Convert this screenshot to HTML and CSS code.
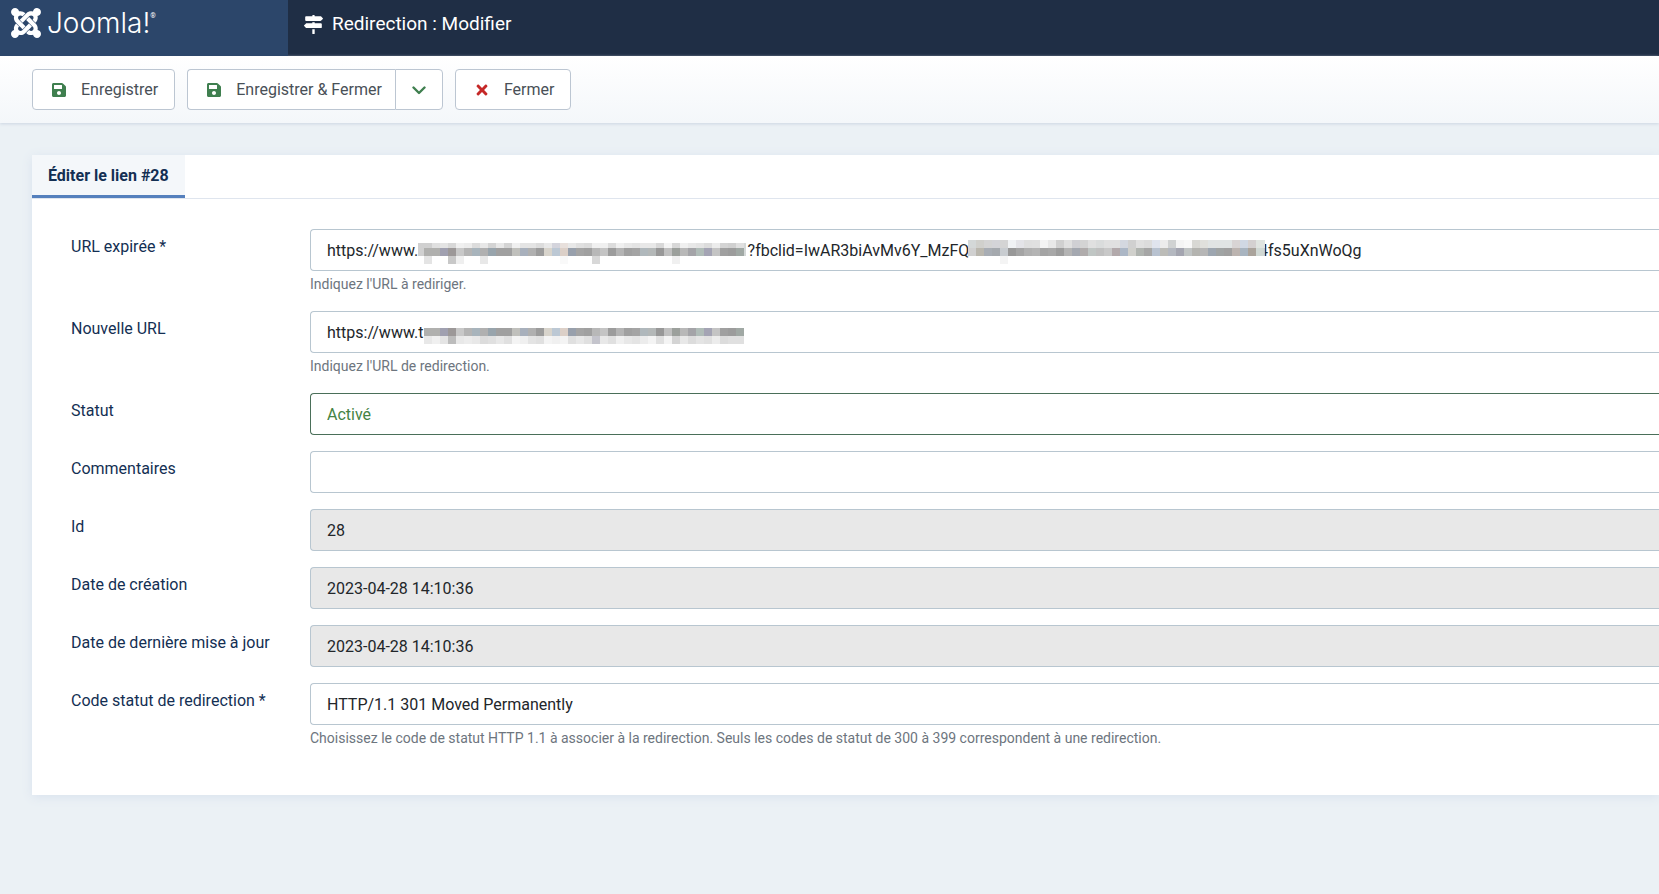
FILE: index.html
```html
<!DOCTYPE html>
<html lang="fr">
<head>
<meta charset="utf-8">
<title>Redirection : Modifier</title>
<link rel="stylesheet" href="styles.css">
</head>
<body>
<header class="header">
  <a class="brand" href="#" aria-label="Joomla!">
    <svg class="brand-mark" viewBox="0 32 448 448" aria-hidden="true"><path d="M.6 92.1C.6 58.8 27.4 32 60.4 32c30 0 54.5 21.9 59.2 50.2 32.6-7.6 67.1.6 96.5 30l-44.3 44.3c-20.5-20.5-42.6-16.3-55.4-3.5-14.3 14.3-14.3 37.9 0 52.2l99.5 99.5-44 44.3c-87.7-87.2-49.7-49.7-99.8-99.7-26.8-26.5-35-64.8-24.8-98.9C20.4 144.6.6 120.7.6 92.1zm129.5 116.4l44.3 44.3c10-10 89.7-89.7 99.7-99.8 14.3-14.3 37.6-14.3 51.9 0 12.8 12.8 17 35-3.5 55.4l44 44.3c31.2-31.2 38.5-67.6 28.9-101.2 29.2-4.1 51.9-29.2 51.9-59.5 0-33.2-26.8-60.1-59.8-60.1-30.3 0-55.4 22.5-59.5 51.6-33.8-9.9-71.7-1.5-98.3 25.1-18.3 19.1-71.1 71.5-99.6 99.9zm266.3 152.2c8.2-32.7-.9-68.5-26.3-93.9-11.8-12.2 5 4.7-99.5-99.7l-44.3 44.3 99.7 99.7c14.3 14.3 14.3 37.6 0 51.9-12.8 12.8-35 17-55.4-3.5l-44 44.3c27.6 30.2 68 38.8 102.7 28 5.5 27.4 29.7 48.1 58.9 48.1 33 0 59.8-26.8 59.8-60.1 0-30.2-22.5-55-51.6-59.1zm-84.3-53.1l-44-44.3c-87 86.4-50.4 50.4-99.7 99.8-14.3 14.3-37.6 14.3-51.9 0-13.1-13.4-16.9-35.3 3.2-55.4l-44-44.3c-30.2 30.2-38 65.2-29.5 98.3-26.7 6-46.2 29.9-46.2 58.2C0 453.2 26.8 480 59.8 480c28.6 0 52.5-19.8 58.6-46.7 32.7 8.2 68.5-.6 94.2-26 32.1-32 12.2-12.4 99.5-99.7z"/></svg>
    <span class="brand-name">Joomla!</span><span class="brand-reg">®</span>
  </a>
  <h1 class="page-title">
    <svg class="title-icon" viewBox="0 0 512 512" aria-hidden="true"><path d="M507.31 84.69L464 41.37c-6-6-14.14-9.37-22.63-9.37H288V16c0-8.84-7.16-16-16-16h-32c-8.84 0-16 7.16-16 16v16H56c-13.25 0-24 10.75-24 24v80c0 13.25 10.75 24 24 24h385.37c8.49 0 16.62-3.37 22.63-9.37l43.31-43.31c6.25-6.26 6.25-16.38 0-22.63zM224 496c0 8.84 7.16 16 16 16h32c8.84 0 16-7.16 16-16V384h-64v112zm232-272H288v-32h-64v32H70.63c-8.49 0-16.62 3.37-22.63 9.37L4.69 276.69c-6.25 6.25-6.25 16.38 0 22.63L48 342.63c6 6 14.14 9.37 22.63 9.37H456c13.25 0 24-10.75 24-24v-80c0-13.25-10.75-24-24-24z"/></svg>
    Redirection : Modifier
  </h1>
</header>

<div class="toolbar">
  <button class="btn" type="button">
    <svg class="icon icon-save" viewBox="0 0 448 512" aria-hidden="true"><path id="save-shape" d="M433.941 129.941l-83.882-83.882A48 48 0 0 0 316.118 32H48C21.49 32 0 53.49 0 80v352c0 26.51 21.49 48 48 48h352c26.51 0 48-21.49 48-48V163.882a48 48 0 0 0-14.059-33.941zM224 416c-35.346 0-64-28.654-64-64 0-35.346 28.654-64 64-64s64 28.654 64 64c0 35.346-28.654 64-64 64zm96-304.52V212c0 6.627-5.373 12-12 12H76c-6.627 0-12-5.373-12-12V108c0-6.627 5.373-12 12-12h228.52c3.183 0 6.235 1.264 8.485 3.515l3.48 3.48A11.996 11.996 0 0 1 320 111.48z"/></svg>
    Enregistrer
  </button>
  <div class="btn-group">
    <button class="btn btn-main" type="button">
      <svg class="icon icon-save" viewBox="0 0 448 512" aria-hidden="true"><use href="#save-shape"/></svg>
      Enregistrer &amp; Fermer
    </button>
    <button class="btn btn-caret" type="button" aria-label="Plus d'actions">
      <svg class="caret" viewBox="0 0 14 14" aria-hidden="true"><path d="M1.5 4.5 7 10l5.5-5.5"/></svg>
    </button>
  </div>
  <button class="btn" type="button">
    <svg class="icon icon-close" viewBox="0 0 352 512" aria-hidden="true"><path d="M242.72 256l100.07-100.07c12.28-12.28 12.28-32.19 0-44.48l-22.24-22.24c-12.28-12.28-32.19-12.28-44.48 0L176 189.28 75.93 89.21c-12.28-12.28-32.19-12.28-44.48 0L9.21 111.45c-12.28 12.28-12.28 32.19 0 44.48L109.28 256 9.21 356.07c-12.28 12.28-12.28 32.19 0 44.48l22.24 22.24c12.28 12.28 32.2 12.28 44.48 0L176 322.72l100.07 100.07c12.28 12.28 32.2 12.28 44.48 0l22.24-22.24c12.28-12.28 12.28-32.19 0-44.48L242.72 256z"/></svg>
    Fermer
  </button>
</div>

<main class="card">
  <div class="tabs" role="tablist">
    <button class="tab" type="button" role="tab" aria-selected="true">Éditer le lien #28</button>
  </div>
  <form class="form">
    <div class="row">
      <label for="old-url">URL expirée *</label>
      <div class="control">
        <input class="field" id="old-url" type="text" value="https://www.                                                                                   ?fbclid=IwAR3biAvMv6Y_MzFQ                                                                         4fs5uXnWoQg">
        <svg class="mask mask-host" data-mask="host" viewBox="0 0 328 24" aria-hidden="true"></svg>
        <svg class="mask mask-query" data-mask="query" viewBox="0 0 297 24" aria-hidden="true"></svg>
        <p class="help">Indiquez l'URL à rediriger.</p>
      </div>
    </div>
    <div class="row">
      <label for="new-url">Nouvelle URL</label>
      <div class="control">
        <input class="field" id="new-url" type="text" value="https://www.t">
        <svg class="mask mask-target" data-mask="target" viewBox="0 0 322 24" aria-hidden="true"></svg>
        <p class="help">Indiquez l'URL de redirection.</p>
      </div>
    </div>
    <div class="row">
      <label for="status">Statut</label>
      <div class="control"><select class="field field-success" id="status"><option>Activé</option></select></div>
    </div>
    <div class="row">
      <label for="comment">Commentaires</label>
      <div class="control"><input class="field" id="comment" type="text"></div>
    </div>
    <div class="row">
      <label for="link-id">Id</label>
      <div class="control"><input class="field" id="link-id" type="text" value="28" readonly></div>
    </div>
    <div class="row">
      <label for="created">Date de création</label>
      <div class="control"><input class="field" id="created" type="text" value="2023-04-28 14:10:36" readonly></div>
    </div>
    <div class="row">
      <label for="modified">Date de dernière mise à jour</label>
      <div class="control"><input class="field" id="modified" type="text" value="2023-04-28 14:10:36" readonly></div>
    </div>
    <div class="row">
      <label for="http-code">Code statut de redirection *</label>
      <div class="control">
        <select class="field" id="http-code"><option>HTTP/1.1 301 Moved Permanently</option></select>
        <p class="help">Choisissez le code de statut HTTP 1.1 à associer à la redirection. Seuls les codes de statut de 300 à 399 correspondent à une redirection.</p>
      </div>
    </div>
  </form>
</main>
<script src="mask.js"></script>
</body>
</html>
```
FILE: styles.css
```css
* {
  box-sizing: border-box;
}

body {
  margin: 0;
  min-height: 100vh;
  background: #ebf1f5;
  color: #22262a;
  font: 16px/24px Roboto, "Liberation Sans", sans-serif;
}

button,
input,
select {
  font: inherit;
}

.header {
  display: flex;
  height: 56px;
  background: #1f2e45;
  color: #fff;
}

.brand {
  display: flex;
  align-items: flex-start;
  width: 288px;
  padding: 8px 11px;
  background: #2c466a;
  color: #fff;
  text-decoration: none;
}

.brand-mark {
  width: 30px;
  height: 30px;
  fill: #fff;
}

.brand-name {
  margin-left: 6px;
  font: 300 28px/30px Inter, "DejaVu Sans", sans-serif;
}

.brand-reg {
  margin-top: 4px;
  font-size: 7px;
  line-height: 8px;
}

.page-title {
  display: flex;
  align-items: center;
  gap: 9px;
  margin: 0;
  padding: 0 16px 8px;
  font-size: 19px;
  font-weight: 400;
}

.title-icon {
  width: 19px;
  height: 19px;
  fill: #fff;
}

.toolbar {
  display: flex;
  gap: 12px;
  padding: 13px 32px;
  background: linear-gradient(#fff, #f4f7fa);
  box-shadow: 0 1px 3px #ccd6e2;
}

.btn {
  display: flex;
  align-items: center;
  gap: 12px;
  height: 41px;
  padding: 0 16px;
  border: 1px solid #bcc6d2;
  border-radius: 4px;
  background: #fff;
  color: #495057;
  white-space: nowrap;
}

.btn-group {
  display: flex;
}

.btn-main {
  padding-right: 13px;
  border-right: 0;
  border-radius: 4px 0 0 4px;
}

.btn-caret {
  justify-content: center;
  width: 48px;
  border-radius: 0 4px 4px 0;
}

.icon {
  width: 20px;
  height: 16px;
}

.icon-save {
  fill: #3f7f4f;
}

.icon-close {
  fill: #c52827;
}

.caret {
  flex: none;
  width: 14px;
  height: 14px;
  fill: none;
  stroke: #3f7f4f;
  stroke-width: 2.4;
  stroke-linecap: round;
  stroke-linejoin: round;
}

.card {
  margin: 32px 0 0 32px;
  background: #fff;
  box-shadow: 0 2px 10px #d9e2ee;
}

.tabs {
  display: flex;
  height: 44px;
  border-bottom: 1px solid #dfe5ee;
}

.tab {
  padding: 2px 16px 0;
  border: 0;
  border-bottom: 3px solid #5580bd;
  background: #f4f7fa;
  color: #132f53;
  font-weight: 700;
}

.form {
  display: flex;
  flex-direction: column;
  gap: 16px;
  padding: 30px 0 46px 39px;
}

.row {
  display: grid;
  grid-template-columns: 239px 1fr;
}

.row label {
  padding-top: 6px;
  color: #132f53;
}

.control {
  position: relative;
}

.field {
  display: block;
  width: 100%;
  height: 42px;
  padding: 0 16px;
  border: 1px solid #b8c6d0;
  border-right: 0;
  border-radius: 4px 0 0 4px;
  outline: 0;
  background: #fff;
  color: #22262a;
  appearance: none;
}

select.field {
  padding-top: 1px;
}

.field:read-only:not(select) {
  background: #e8e8e8;
}

.field-success {
  border-color: #4a6f59;
  color: #448344;
}

.help {
  margin: 3px 0 1px;
  color: #6d757e;
  font-size: 14px;
  line-height: 20px;
}

/* Pixelated masks laid over private parts of an address */
.mask {
  position: absolute;
  height: 24px;
  shape-rendering: crispEdges;
}

.mask-host {
  top: 11px;
  left: 108px;
  width: 328px;
}

.mask-query {
  top: 11px;
  left: 658px;
  width: 297px;
}

.mask-target {
  top: 9px;
  left: 112px;
  width: 322px;
}
```
FILE: mask.js
```js
// Each mask is a list of rows of 8px cells; "-" leaves a cell empty.
const hostTones = "b0b0ae b0b0ae a0a0b0 9c9898 c8c8c8 b4b4b4 a8b4bc b0b0b0 98a4ac a0a0a0 a0a0a0 c0c0bc a8b0bc b0b0b0 9c9c9c d8d4cc bcc8d4 dcd0c8 98a0ac a4a4a4 a0a0a0 b8b8b8 c4c4c4 9c9c9c b4b4b4 a0a0a0 a4a4a4 b0b8bc b4b8b8 989898 c0c0c0 9ca09c b8b8b8 a4a4a8 b0bcb8 a4a4b4 c4c4c4 a0a0a0 9c9c9c a0a8a4";
const masks = {
  host: [
    { x: 0, y: 3, w: 6, h: 13, tones: "d0d0d0" },
    { x: 6, y: 3, h: 5, tones: "d0d0d0 e0e0e0 e4e4e4 d8d8d8 f0f0f0 ececec dcdcdc e8e8e8 d4d4d4 e8e8e8 d4d4d4 f0f0f0 e4e4e4 e4e4e4 dcdcdc e8e8e8 d4d4dc e8e0dc e8e8e8 e0e0e0 dcdcdc f0f0f0 f0f0f0 dcdcdc f0f0f0 e8e8e8 e4e4e4 e8e8e8 e8e8e8 d8d8d8 f4f4f4 d8d8d8 f0f0f0 e8e8e8 e4e4e4 dcdcdc ececec d4d4d4 d0d0d0 e0e0e0" },
    { x: 6, y: 8, h: 8, tones: hostTones },
    { x: 6, y: 16, h: 8, tones: "e4e4e4 - - c8c8c8 efefef - - e8e8e8 - - - - - - - - - f9f9f9 - - - d8d8d8 - - - - - - - - - f0f0f0" },
    { x: 326, y: 3, w: 3, h: 13, tones: "d4d8d8" }
  ],
  query: [
    { x: 0, y: 0, h: 8, tones: "d4d8d8 d0d0cc d4d4d4 d4d4d8 d4d4d4 f0f2f4 e4e4e8 dfdfdf e0e0e0 f4f4f4 e8e8e8 d0d0d0 e0e0e0 d0d0d4 d4d4d4 e0e0e0 dadcdc e0e0e0 e0e0e0 d4d8e0 d0d0d0 e0e0e0 dcdcdc e0e4ee ececec d0d2d2 f4f4f4 f8f8f8 d8d8d4 e0e0dc e0e4e4 e0e4e4 e0e4e4 d8d4d4 d0d8e4 d4d0d0 e0e4e0 e0e4e0" },
    { x: 0, y: 8, h: 8, tones: "d0d0d0 bab7ae a8adb4 a5a9ae c8ccd0 989898 a4a4a4 b0b0b0 b4b4b4 a4a4a4 a8a8a8 9c9c9c b4b4b4 a4a8b0 b0acac c0c6c4 c0c0c0 c8c8c8 b2a9ab acb7c6 d0d0cc b0b4b0 a6a6a6 b8c2d0 bcbcb8 b4b8c0 a4a5b0 c0c4c4 b4b4b0 b6b6b6 9da6b0 a0a4a4 a0a0a0 bcb4b0 a8b4c0 aaa39b d0d8d4 c0c4c4" },
    { x: 0, y: 16, h: 8, tones: "- - - - f4f4f4" }
  ],
  target: [
    { x: 2, y: 8, h: 8, tones: hostTones },
    { x: 2, y: 16, h: 8, tones: "e8e8e8 f0f0f0 e4e4e4 bcbcbc e8e8e8 ececec e8e8e8 dcdcdc e0e0e0 e8e8e8 e0e0e0 f4f4f4 f0f0f0 e4e4e4 e0e0e0 f4f4f4 f0f0f0 f4f4f4 e0e0e0 e8e8e8 e0e0e0 c4c4cc e8e8e8 e0e0e0 f0f0f0 e8e8e8 e4e4e4 ececec f4f4f4 e0e0e0 f4f4f4 d4d4d4 e8e8e8 dcdcdc e4e4e4 e0e0e0 ececec dcdcdc e0e0e0 e0e0e0" }
  ]
};

document.querySelectorAll("[data-mask]").forEach((svg) => {
  for (const row of masks[svg.dataset.mask]) {
    row.tones.split(" ").forEach((tone, i) => {
      if (tone === "-") return;
      const cell = document.createElementNS("http://www.w3.org/2000/svg", "rect");
      const width = row.w || 8;
      cell.setAttribute("x", row.x + i * width);
      cell.setAttribute("y", row.y);
      cell.setAttribute("width", width);
      cell.setAttribute("height", row.h);
      cell.setAttribute("fill", "#" + tone);
      svg.append(cell);
    });
  }
});
```
